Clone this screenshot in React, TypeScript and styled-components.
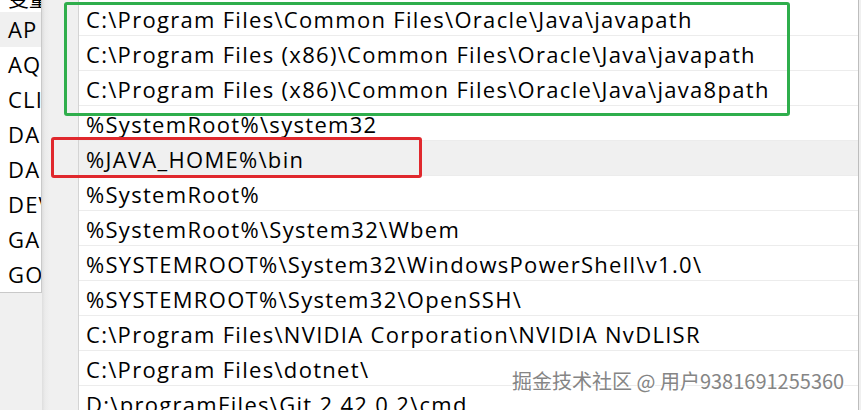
import React from 'react';
import styled, { createGlobalStyle } from 'styled-components';

const Global = createGlobalStyle`
  html, body { margin: 0; padding: 0; background: #f0f0f0; }
  body { font-family: "Open Sans", "Noto Sans CJK SC", sans-serif; color: #000; }
`;

const Screen = styled.div`
  position: relative;
  width: 861px;
  height: 410px;
  overflow: hidden;
  display: flex;
  align-items: flex-start;
  background: #f0f0f0;
`;

const SideList = styled.div`
  width: 41px;
  flex-shrink: 0;
  background: #fff;
  border-right: 1px solid #c9c9c9;
  border-bottom: 1px solid #c9c9c9;
  overflow: hidden;
`;

const SideHeader = styled.div`
  height: 12px;
  overflow: hidden;
  display: flex;
  align-items: flex-end;
  padding-left: 8px;
  font-size: 21px;
  & > span { line-height: 28px; white-space: nowrap; }
`;

const SideRow = styled.div<{ $active?: boolean }>`
  height: 35px;
  line-height: 35px;
  padding-left: 8px;
  font-size: 22px;
  letter-spacing: 1.2px;
  white-space: nowrap;
  background: ${p => (p.$active ? '#f0f0f0' : '#fff')};
`;

const Gutter = styled.div`
  width: 36px;
  height: 410px;
  flex-shrink: 0;
  background: linear-gradient(to right, #dedede 0, #ebebeb 3px, #f0f0f0 8px, #f0f0f0 100%);
`;

const MainList = styled.div`
  flex: 1;
  height: 410px;
  margin-right: 2px;
  padding-top: 1px;
  box-sizing: border-box;
  background: #fff;
  border-left: 1px solid #d4d4d4;
  border-right: 1px solid #bdbdbd;
  overflow: hidden;
`;

const Row = styled.div<{ $selected?: boolean }>`
  height: 35px;
  box-sizing: border-box;
  border-bottom: 1px solid #ececec;
  padding-left: 7px;
  line-height: 36px;
  font-size: 22px;
  letter-spacing: 1.3px;
  white-space: nowrap;
  background: ${p => (p.$selected ? '#f0f0f0' : '#fff')};
`;

const Mark = styled.div<{ $c: string; $x: number; $y: number; $w: number; $h: number }>`
  position: absolute;
  left: ${p => p.$x}px;
  top: ${p => p.$y}px;
  width: ${p => p.$w}px;
  height: ${p => p.$h}px;
  box-sizing: border-box;
  border: 3px solid ${p => p.$c};
  border-radius: 3px;
  pointer-events: none;
`;

const Watermark = styled.div`
  position: absolute;
  left: 512px;
  top: 367px;
  font-family: "Noto Sans CJK SC", sans-serif;
  font-size: 20px;
  line-height: 28px;
  color: #858585;
  white-space: nowrap;
  text-shadow: 0 0 2px #fff, 0 0 2px #fff, 1px 1px 0 #fff;
`;

const sideItems = ['AP', 'AQ', 'CLI', 'DA', 'DA', 'DEV', 'GA', 'GO'];

const paths = [
  'C:\\Program Files\\Common Files\\Oracle\\Java\\javapath',
  'C:\\Program Files (x86)\\Common Files\\Oracle\\Java\\javapath',
  'C:\\Program Files (x86)\\Common Files\\Oracle\\Java\\java8path',
  '%SystemRoot%\\system32',
  '%JAVA_HOME%\\bin',
  '%SystemRoot%',
  '%SystemRoot%\\System32\\Wbem',
  '%SYSTEMROOT%\\System32\\WindowsPowerShell\\v1.0\\',
  '%SYSTEMROOT%\\System32\\OpenSSH\\',
  'C:\\Program Files\\NVIDIA Corporation\\NVIDIA NvDLISR',
  'C:\\Program Files\\dotnet\\',
  'D:\\programFiles\\Git 2.42.0.2\\cmd',
];

export default function App() {
  return (
    <>
      <Global />
      <Screen>
        <SideList>
          <SideHeader><span>变量</span></SideHeader>
          {sideItems.map((s, i) => (
            <SideRow key={i} $active={i === 0}>{s}</SideRow>
          ))}
        </SideList>
        <Gutter />
        <MainList>
          {paths.map((p, i) => (
            <Row key={i} $selected={i === 4}>{p}</Row>
          ))}
        </MainList>
        <Mark $c="#2fae4c" $x={64} $y={2} $w={726} $h={114} />
        <Mark $c="#e0282d" $x={51} $y={137} $w={371} $h={41} />
        <Watermark>掘金技术社区 @ 用户9381691255360</Watermark>
      </Screen>
    </>
  );
}
